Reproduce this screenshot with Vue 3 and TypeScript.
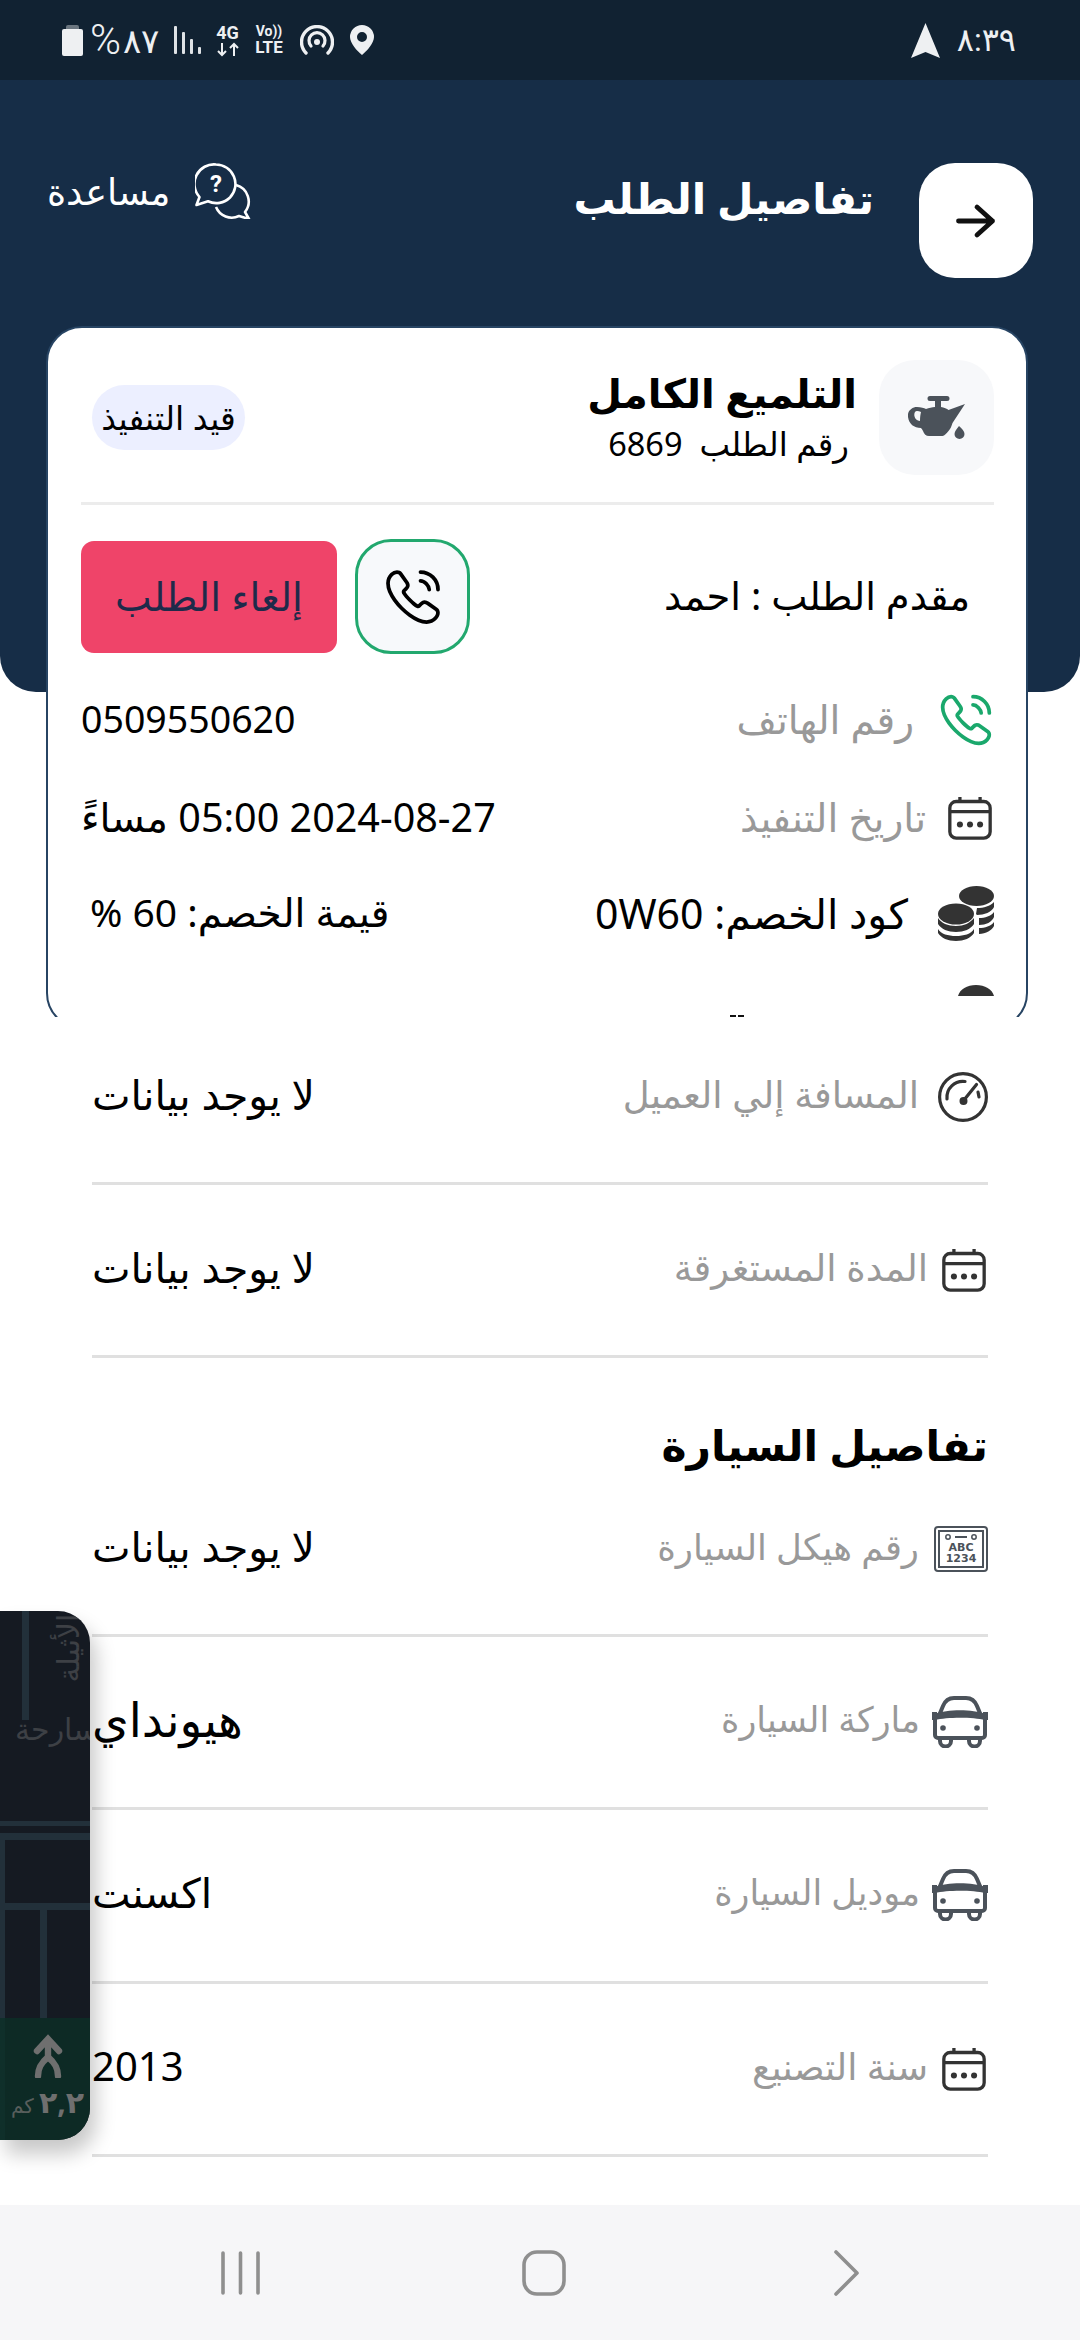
<script setup lang="ts">
const phone = 'M21.97 18.33c0 .36-.08.73-.25 1.09-.17.36-.39.7-.68 1.02-.49.54-1.03.93-1.64 1.18-.6.25-1.25.38-1.95.38-1.02 0-2.11-.24-3.26-.73s-2.3-1.15-3.44-1.98a28.75 28.75 0 0 1-3.28-2.8 28.414 28.414 0 0 1-2.79-3.27c-.82-1.14-1.48-2.28-1.96-3.41C2.24 8.67 2 7.58 2 6.54c0-.68.12-1.33.36-1.93.24-.61.62-1.17 1.15-1.67C4.15 2.31 4.85 2 5.59 2c.28 0 .56.06.81.18.26.12.49.3.67.56l2.32 3.27c.18.25.31.48.4.7.09.21.14.42.14.61 0 .24-.07.48-.21.71-.13.23-.32.47-.56.71l-.76.79c-.11.11-.16.24-.16.4 0 .08.01.15.03.23.03.08.06.14.08.2.18.33.49.76.93 1.28.45.52.93 1.05 1.45 1.58.54.53 1.06 1.02 1.59 1.47.52.44.95.74 1.29.92.05.02.11.05.18.08.08.03.16.04.25.04.17 0 .3-.06.41-.17l.76-.75c.25-.25.49-.44.72-.56.23-.14.46-.21.71-.21.19 0 .39.04.61.13.22.09.45.22.7.39l3.31 2.35c.26.18.44.39.55.64.1.25.16.5.16.78Z'
const waves = 'M18.5 9c0-.6-.47-1.52-1.17-2.27-.64-.69-1.49-1.23-2.33-1.23M22 9c0-3.87-3.13-7-7-7'
const carRows = [
  { label: 'ماركة السيارة', value: 'هيونداي', cls: 'wide' },
  { label: 'موديل السيارة', value: 'اكسنت', cls: '' },
]
</script>

<template>
  <div class="page">
    <div class="status">
      <div class="status-left">
        <svg class="st-batt" viewBox="0 0 21 31"><path d="M6 0h9a2 2 0 0 1 2 2v2h-13V2a2 2 0 0 1 2-2Z" fill="#6b7680"/><path d="M2 4h17a2 2 0 0 1 2 2v23a2 2 0 0 1-2 2H2a2 2 0 0 1-2-2V6a2 2 0 0 1 2-2Z" fill="#eef0f2"/></svg>
        <span class="st-pct"><span class="pct-sign">%</span><span class="pct-num">٨٧</span></span>
        <svg class="st-signal" viewBox="0 0 27 28"><rect x="0" y="0" width="3" height="28" rx="1" fill="#dfe3e6"/><rect x="8" y="6" width="3" height="22" rx="1" fill="#dfe3e6"/><rect x="16" y="13" width="3" height="15" rx="1" fill="#dfe3e6"/><rect x="24" y="21" width="3" height="7" rx="1" fill="#dfe3e6"/></svg>
        <div class="st-net"><span>4G</span><svg viewBox="0 0 24 15" width="24" height="15"><path d="M6 1v12M2 9l4 4 4-4M18 14V2M14 6l4-4 4 4" fill="none" stroke="#eef0f2" stroke-width="2"/></svg></div>
        <div class="st-lte"><span>Vo))</span><span class="lte2">LTE</span></div>
        <svg class="st-hot" viewBox="0 0 34 30"><path d="M6 28A15.5 15.5 0 1 1 28 28" fill="none" stroke="#eef0f2" stroke-width="3.4" stroke-linecap="round"/><path d="M11 21a8 8 0 1 1 12 0" fill="none" stroke="#eef0f2" stroke-width="3.2" stroke-linecap="round"/><circle cx="17" cy="17" r="3" fill="#eef0f2"/></svg>
        <svg class="st-pin" viewBox="0 0 24 30"><path fill-rule="evenodd" d="M12 0a12 12 0 0 1 12 12c0 6-7 14-12 18C7 26 0 18 0 12A12 12 0 0 1 12 0Zm0 7a5 5 0 1 0 0 10 5 5 0 0 0 0-10Z" fill="#eef0f2"/></svg>
      </div>
      <div class="status-right">
        <svg class="st-nav" viewBox="0 0 29 35"><path d="M14.5 0 29 35l-14.5-6L0 35Z" fill="#eef0f2"/></svg>
        <span class="st-time">٨:٣٩</span>
      </div>
    </div>

    <header class="hero">
      <div class="help">
        <span class="help-text">مساعدة</span>
        <svg class="help-icon" viewBox="0 0 56 56" fill="none" stroke="#fff" stroke-width="2.6">
          <path d="M21 1.5a19.5 19.5 0 0 1 14 33 19.5 19.5 0 0 1-22 3.8L1.5 42l3-8A19.5 19.5 0 0 1 21 1.5Z" stroke-linejoin="round"/>
          <path d="M41 22a17 17 0 0 1 9 27l4 7-10-3a17 17 0 0 1-23-9" stroke-linejoin="round"/>
          <text x="21" y="29" text-anchor="middle" class="help-q" fill="#fff" stroke="none">?</text>
        </svg>
      </div>
      <div class="hero-main">
        <h1 class="hero-title">تفاصيل الطلب</h1>
        <button class="back" type="button">
          <svg viewBox="0 0 40 36" width="40" height="36"><path d="M2.500 18h34M21 4l15.500 14L21 32" fill="none" stroke="#111" stroke-width="4.800" stroke-linecap="round" stroke-linejoin="round"/></svg>
        </button>
      </div>
    </header>

    <section class="card-clip">
      <div class="card">
        <div class="card-top">
          <div class="service">
            <div class="oil-box">
              <svg class="oil" viewBox="0 0 57 43"><path fill-rule="evenodd" fill="#4b525a" d="M22 0h17a2 2 0 0 1 0 5h-6v6c3 .5 6 1.5 7.500 3L57 8 44.500 27c-1 3-2 6-4 8-2 2-4 5-6 5H21c-3 0-5-2-6-5-1-2-1.500-2.500-2-3-7 0-12-4-13-11-1-6 4-10 9-10 4 0 7 1 9 2 3-1 6-2 9-2V5h-5a2 2 0 0 1 0-5ZM9 15c-2 0-3 2-2.600 5 .5 3 2.600 4.500 5.600 5 0-4 .5-7 1-9-1.300-.7-2.600-1-4-1Z"/><path d="M51 30c3 3 5.500 5 5.500 8a5 5 0 0 1-10 0c0-3 2.500-5 4.500-8Z" fill="#4b525a"/></svg>
            </div>
            <div class="service-text">
              <div class="service-name">التلميع الكامل</div>
              <div class="service-no">رقم الطلب &nbsp;6869</div>
            </div>
          </div>
          <div class="badge">قيد التنفيذ</div>
        </div>
        <div class="rule"></div>

        <div class="applicant">
          <span class="app-name">مقدم الطلب : احمد</span>
          <div class="actions">
            <button class="call" type="button">
              <svg viewBox="0 0 24 24" width="60" height="60" fill="none" stroke="#000" stroke-width="1.5" stroke-miterlimit="10" stroke-linecap="round"><path :d="phone"/><path :d="waves"/></svg>
            </button>
            <button class="cancel" type="button">إلغاء الطلب</button>
          </div>
        </div>

        <div class="c-row">
          <div class="lab gap-24">
            <svg class="ic-phone" viewBox="0 0 24 24" fill="none" stroke="#1aa86c" stroke-width="1.6" stroke-miterlimit="10" stroke-linecap="round"><path :d="phone"/><path :d="waves"/></svg>
            <span class="muted top">رقم الهاتف</span>
          </div>
          <span class="val">0509550620</span>
        </div>

        <div class="c-row">
          <div class="lab gap-20">
            <svg class="ic-cal" viewBox="0 0 48 48" fill="none" stroke="#333" stroke-width="3.600"><rect x="2" y="6" width="44" height="40" rx="7"/><path d="M2 17h44M13 1v5M35 1v5"/><g fill="#333" stroke="none"><circle cx="13" cy="31" r="3.300"/><circle cx="24" cy="31" r="3.300"/><circle cx="35" cy="31" r="3.300"/></g></svg>
            <span class="muted top">تاريخ التنفيذ</span>
          </div>
          <span class="val date">2024-08-27 05:00 مساءً</span>
        </div>

        <div class="c-row coupon">
          <div class="lab gap-30">
            <svg class="ic-coins" viewBox="0 0 56 56"><g fill="#333"><ellipse cx="38.500" cy="11" rx="17.500" ry="10"/><path d="M39 23c7 0 13-2 17-6v5c-2 5-10 8-17 8l-1-1ZM41 33c6 0 12-2 15-6v5c-2 5-8 8-15 8ZM41 43c6 0 12-2 15-6v4c-2 4-8 8-15 8Z"/><ellipse cx="18" cy="29" rx="18" ry="10.500"/><path d="M0 33c3 5 10 8 18 8s14-3 18-8v6c-3 5-10 8-18 8S3 44 0 39ZM0 44c3 5 10 7 18 7s15-2 18-7v4c-3 5-10 8-18 8S3 53 0 48Z"/></g></svg>
            <span class="coupon-l">كود الخصم: 0W60</span>
          </div>
          <span class="val coupon-v">قيمة الخصم: 60 %</span>
        </div>

        <div class="c-last">
          <svg class="ic-sliver" viewBox="0 0 36 11"><path d="M0 11C2 4 9 0 18 0s16 4 18 11Z" fill="#333"/></svg>
          <i class="dash"></i>
        </div>
      </div>
    </section>

    <main class="list">
      <div class="row first">
        <div class="lab gap-19">
          <svg class="ic-gauge" viewBox="0 0 50 50" fill="none" stroke="#333" stroke-width="3.200" stroke-linecap="round"><circle cx="25" cy="25" r="23.400"/><path d="M9 27A16 16 0 0 1 27 9.500M26 28l12.500-15.500M40 20l1 5"/><circle cx="25.500" cy="29" r="2.400" fill="#333"/></svg>
          <span class="muted m37">المسافة إلي العميل</span>
        </div>
        <span class="val big">لا يوجد بيانات</span>
      </div>
      <div class="row">
        <div class="lab gap-12">
          <svg class="ic-cal" viewBox="0 0 48 48" fill="none" stroke="#333" stroke-width="3.600"><rect x="2" y="6" width="44" height="40" rx="7"/><path d="M2 17h44M13 1v5M35 1v5"/><g fill="#333" stroke="none"><circle cx="13" cy="31" r="3.300"/><circle cx="24" cy="31" r="3.300"/><circle cx="35" cy="31" r="3.300"/></g></svg>
          <span class="muted m37">المدة المستغرقة</span>
        </div>
        <span class="val big">لا يوجد بيانات</span>
      </div>

      <h2 class="section">تفاصيل السيارة</h2>

      <div class="row">
        <div class="lab gap-15">
          <svg class="ic-plate" viewBox="0 0 54 46" fill="none" stroke="#4b525a"><rect x="1" y="1" width="52" height="44" rx="3" stroke-width="2"/><rect x="5" y="5" width="44" height="36" stroke-width="2"/><circle cx="14" cy="11" r="2.200" stroke-width="1.500"/><circle cx="40" cy="11" r="2.200" stroke-width="1.500"/><path d="M21 11h12" stroke-width="2"/><text x="27" y="25" text-anchor="middle" class="plate-t" fill="#4b525a" stroke="none">ABC</text><text x="27" y="36" text-anchor="middle" class="plate-t" fill="#4b525a" stroke="none">1234</text></svg>
          <span class="muted">رقم هيكل السيارة</span>
        </div>
        <span class="val big">لا يوجد بيانات</span>
      </div>

      <div v-for="c in carRows" :key="c.label" class="row">
        <div class="lab gap-12">
          <svg class="ic-car" viewBox="0 0 56 52"><g fill="none" stroke="#4b525a" stroke-width="4"><path d="M6 22 11 10c2-5 6-8 11-8h12c5 0 9 3 11 8l5 12"/><path d="M3 21c12-4 38-4 50 0v18a3 3 0 0 1-3 3H6a3 3 0 0 1-3-3Z" stroke-linejoin="round"/><path d="M8 42v3a5.500 5.500 0 0 0 11 0v-3M37 42v3a5.500 5.500 0 0 0 11 0v-3"/></g><path d="M3 18c12-5 38-5 50 0v6c-12-3-38-3-50 0Z" fill="#4b525a"/><path d="M0 16h5v8H0zM51 16h5v8h-5z" fill="#4b525a"/><circle cx="11" cy="32" r="2.800" fill="#4b525a"/><circle cx="45" cy="32" r="2.800" fill="#4b525a"/></svg>
          <span class="muted m35">{{ c.label }}</span>
        </div>
        <span class="val big" :class="c.cls">{{ c.value }}</span>
      </div>

      <div class="row">
        <div class="lab gap-12">
          <svg class="ic-cal" viewBox="0 0 48 48" fill="none" stroke="#333" stroke-width="3.600"><rect x="2" y="6" width="44" height="40" rx="7"/><path d="M2 17h44M13 1v5M35 1v5"/><g fill="#333" stroke="none"><circle cx="13" cy="31" r="3.300"/><circle cx="24" cy="31" r="3.300"/><circle cx="35" cy="31" r="3.300"/></g></svg>
          <span class="muted m36">سنة التصنيع</span>
        </div>
        <span class="val big year">2013</span>
      </div>
    </main>

    <nav class="navbar">
      <svg class="n-recents" viewBox="0 0 39 44"><g stroke="#8f8f8f" stroke-width="3.600" stroke-linecap="round"><path d="M2 2v40M19.500 2v40M37 2v40"/></g></svg>
      <svg class="n-home" viewBox="0 0 44 46"><rect x="2" y="2" width="40" height="42" rx="13" fill="none" stroke="#8f8f8f" stroke-width="3.600"/></svg>
      <svg class="n-back" viewBox="0 0 26 46"><path d="M2 2 23 23 2 44" fill="none" stroke="#8f8f8f" stroke-width="3.600" stroke-linecap="round" stroke-linejoin="round"/></svg>
    </nav>

    <aside class="float">
      <div class="float-map">
        <i class="m m1"></i><i class="m m2"></i><i class="m m3"></i><i class="m m4"></i><i class="m m5"></i><i class="m m6"></i>
        <span class="map-t1">الأثيلة</span>
        <span class="map-t2">سارحة</span>
      </div>
      <div class="float-go">
        <svg viewBox="0 0 30 44" width="30" height="44"><path d="M4 17 15 5l11 12M15 6v17M5 42c0-8 3-13 10-19 7 6 10 11 10 19" fill="none" stroke="#6f6f6f" stroke-width="6.400" stroke-linecap="round" stroke-linejoin="miter"/></svg>
        <span class="dist"><b>٢,٢</b> كم</span>
      </div>
    </aside>
  </div>
</template>

<style>
html, body { margin: 0; background: #fff; }
</style>

<style scoped>
.page {
  position: relative;
  width: 1080px;
  height: 2340px;
  overflow: hidden;
  display: flex;
  flex-direction: column;
  background: #fff;
  font-family: "Noto Sans", "DejaVu Sans", sans-serif;
  color: #000;
}
.status {
  height: 80px;
  flex: none;
  background: #112232;
  display: flex;
  justify-content: space-between;
  align-items: center;
  padding: 0 64px 0 62px;
  box-sizing: border-box;
  color: #eef0f2;
}
.status-left, .status-right { display: flex; align-items: center; }
.st-batt { width: 21px; height: 31px; margin-right: 7px; }
.st-pct { width: 70px; display: flex; align-items: center; white-space: nowrap; margin-right: 14px; }
.pct-sign { font: 300 42px/40px "Roboto", sans-serif; }
.pct-num { font-family: "Noto Sans", "DejaVu Sans", sans-serif; font-size: 34px; line-height: 40px; font-weight: 300; margin-left: 2px; }
.st-signal { width: 27px; height: 28px; margin-right: 14px; }
.st-net { width: 25px; display: flex; flex-direction: column; align-items: center; margin-right: 13px; font: 700 18px/18px "Roboto", sans-serif; }
.st-lte { width: 32px; display: flex; flex-direction: column; align-items: center; margin-right: 15px; font: 700 14px/15px "Roboto", sans-serif; }
.lte2 { font-size: 17px; line-height: 17px; }
.st-hot { width: 34px; height: 30px; margin-right: 16px; }
.st-pin { width: 24px; height: 30px; }
.st-nav { width: 29px; height: 35px; margin-right: 17px; }
.st-time { font: 32px/36px "Roboto", "DejaVu Sans", sans-serif; }

.hero {
  flex: none;
  height: 612px;
  background: #162d47;
  border-radius: 0 0 36px 36px;
  display: flex;
  justify-content: space-between;
  align-items: flex-start;
  padding: 83px 47px 0 47px;
  box-sizing: border-box;
}
.help { display: flex; align-items: center; gap: 25px; }
.help-text { color: #fff; font-size: 36.500px; line-height: 40px; white-space: nowrap; }
.help-icon { width: 56px; height: 56px; }
.help-q { font: 700 24px "Roboto", sans-serif; }
.hero-main { display: flex; align-items: flex-start; gap: 45px; }
.hero-title { margin: 5px 0 0; color: #fff; font-size: 42px; line-height: 60px; font-weight: 700; white-space: nowrap; }
.back {
  width: 114px; height: 115px;
  border: 0; border-radius: 36px; background: #fff;
  display: flex; align-items: center; justify-content: center; padding: 0;
}

.card-clip {
  flex: none;
  height: 691px;
  margin: -366px 52px 0 46px;
  overflow: hidden;
  position: relative;
}
.card {
  height: 703px;
  box-sizing: border-box;
  background: #fff;
  border: 2px solid #274463;
  border-radius: 36px;
  padding: 32px 32px 0 33px;
}
.card-top { display: flex; direction: rtl; justify-content: space-between; align-items: center; height: 115px; padding-left: 11px; }
.service { display: flex; gap: 22px; align-items: center; }
.oil-box { width: 115px; height: 115px; border-radius: 36px; background: #f7f8fa; display: flex; align-items: center; justify-content: center; }
.oil { width: 57px; height: 43px; }
.service-text { display: flex; flex-direction: column; gap: 6px; }
.service-name { font-size: 40px; line-height: 46px; font-weight: 700; white-space: nowrap; }
.service-no { font-size: 32.500px; line-height: 44px; padding-right: 8px; white-space: nowrap; }
.badge { width: 153px; height: 65px; border-radius: 33px; background: #ecefff; display: flex; align-items: center; justify-content: center; font-size: 33px; white-space: nowrap; }
.rule { height: 3px; background: #ececec; margin-top: 27px; }
.applicant { display: flex; direction: rtl; justify-content: space-between; align-items: center; margin-top: 34px; padding-right: 24px; }
.app-name { font-size: 38.500px; line-height: 44px; padding-bottom: 4px; white-space: nowrap; }
.actions { display: flex; gap: 18px; align-items: center; }
.call {
  width: 115px; height: 115px; box-sizing: border-box;
  border: 3px solid #22a86e; border-radius: 36px; background: #f7f9fb;
  display: flex; align-items: center; justify-content: center; padding: 0;
}
.cancel {
  width: 256px; height: 112px; border: 0; border-radius: 13px;
  background: #ef4469; color: #1f2a4a;
  font-family: inherit; font-size: 39px; padding: 0 0 3px;
}
.c-row { display: flex; direction: rtl; justify-content: space-between; align-items: center; height: 98px; }
.applicant + .c-row { margin-top: 17px; }
.c-row.coupon { margin-top: -3px; }
.lab { display: flex; align-items: center; gap: 22px; }
.gap-24 { gap: 24px; }
.gap-30 { gap: 30px; }
.gap-20 { gap: 20px; }
.gap-19 { gap: 19px; }
.gap-15 { gap: 15px; }
.gap-12 { gap: 12px; }
.muted { color: #999; font-size: 35.500px; line-height: 44px; padding-bottom: 6px; white-space: nowrap; }
.muted.top { font-size: 39px; padding-bottom: 2px; }
.muted.m37 { font-size: 37px; }
.muted.m36 { font-size: 36.500px; }
.muted.m35 { font-size: 35px; }
.val { font-size: 37.500px; line-height: 44px; padding-bottom: 2px; white-space: nowrap; }
.val.date { font-size: 39.500px; }
.ic-phone { width: 56px; height: 56px; }
.ic-cal { width: 48px; height: 44px; }
.ic-coins { width: 56px; height: 56px; }
.coupon-l { font-size: 41px; line-height: 44px; white-space: nowrap; }
.coupon-v { padding-left: 9px; font-size: 39px; }
.c-last { direction: rtl; position: relative; height: 60px; padding-top: 23px; }
.ic-sliver { display: block; width: 36px; height: 11px; }
.dash { position: absolute; left: 649px; top: 53px; width: 14px; height: 2px; background: repeating-linear-gradient(90deg, #111 0 6px, transparent 6px 8px); }

.list { flex: 1; padding: 0 92px; background: #fff; position: relative; z-index: 1; }
.row {
  direction: rtl;
  height: 173.400px;
  box-sizing: border-box;
  border-bottom: 3px solid #e0e0e0;
  display: flex;
  justify-content: space-between;
  align-items: center;
}
.row.first { height: 168px; padding-bottom: 6px; }
.val.big { font-size: 41px; padding-bottom: 6px; }
.val.big.wide { font-size: 47px; }
.val.big.year { font-size: 40px; }
.section { margin: 0; direction: rtl; height: 105px; padding-top: 62px; box-sizing: border-box; font-size: 42.500px; line-height: 50px; font-weight: 700; white-space: nowrap; }
.ic-gauge { width: 50px; height: 50px; }
.ic-plate { width: 54px; height: 46px; }
.plate-t { font: 700 11px "DejaVu Sans", sans-serif; }
.ic-car { width: 56px; height: 52px; }

.navbar {
  flex: none;
  height: 135px;
  background: #f6f6f8;
  position: relative;
  z-index: 1;
  display: grid;
  grid-template-columns: 1fr 1fr 1fr;
  align-items: center;
  justify-items: center;
  padding: 0 82px 0 89px;
}
.n-recents { width: 39px; height: 44px; }
.n-home { width: 44px; height: 46px; }
.n-back { width: 26px; height: 46px; }

.float {
  position: absolute;
  left: 0;
  top: 1611px;
  width: 90px;
  height: 529px;
  z-index: 2;
  border-radius: 0 32px 32px 0;
  overflow: hidden;
  box-shadow: 6px 14px 20px rgba(0,0,0,.22);
  display: flex;
  flex-direction: column;
  background: #151a22;
}
.float-map { position: relative; height: 407px; flex: none; }
.m { position: absolute; background: #22303a; }
.m1 { left: 22px; top: 0; width: 7px; height: 109px; }
.m2 { left: 0; top: 210px; width: 90px; height: 5px; }
.m3 { left: 0; top: 222px; width: 90px; height: 7px; }
.m4 { left: 4px; top: 292px; width: 86px; height: 7px; }
.m5 { left: 40px; top: 296px; width: 7px; height: 111px; }
.m6 { left: 0; top: 229px; width: 5px; height: 178px; }
.map-t1 { position: absolute; left: 34px; top: 22px; transform: rotate(-90deg); color: #3d4045; font-size: 30px; line-height: 30px; white-space: nowrap; }
.map-t2 { position: absolute; left: 15px; top: 97px; color: #3d4045; font-size: 30px; white-space: nowrap; }
.float-go { flex: 1; background: #0d2a25; display: flex; flex-direction: column; align-items: center; padding-top: 16px; gap: 8px; box-sizing: border-box; border-left: 5px solid #0f2f2a; }
.dist { color: #585e5c; font-size: 20px; line-height: 32px; direction: rtl; white-space: nowrap; }
.dist b { font-size: 30px; color: #6f6f6f; }
</style>
